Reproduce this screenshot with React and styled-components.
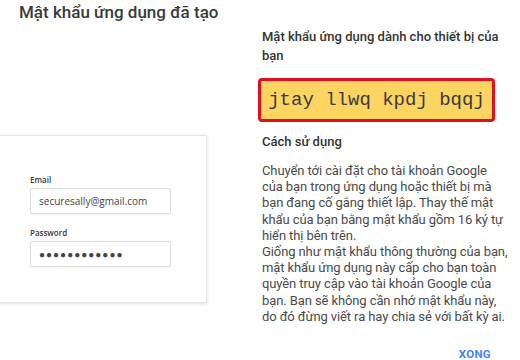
import React from "react";
import styled, { createGlobalStyle } from "styled-components";

const GlobalStyle = createGlobalStyle`
  html, body {
    margin: 0;
    padding: 0;
    background: #ffffff;
    font-family: Roboto, "Noto Sans", Arial, sans-serif;
    overflow: hidden;
  }
`;

const Page = styled.div`
  width: 520px;
  height: 360px;
  overflow: hidden;
`;

const Title = styled.h1`
  margin: 0;
  padding: 2px 0 0 19px;
  font-size: 17px;
  font-weight: 500;
  color: #3a3a3a;
  line-height: 20px;
`;

const Body = styled.div`
  display: grid;
  grid-template-columns: 258px 262px;
  margin-top: 5px;
`;

const LeftCol = styled.div`
  padding-top: 108px;
`;

const Card = styled.div`
  margin-left: -12px;
  width: 219px;
  height: 168px;
  border: 1px solid #e6e6e6;
  box-shadow: 0 1px 3px rgba(0, 0, 0, 0.12);
  background: #fff;
  box-sizing: border-box;
  padding: 39px 0 0 41px;
`;

const FieldLabel = styled.div`
  font-size: 8px;
  font-weight: 600;
  color: #3a3a3a;
  font-family: "Open Sans", Roboto, sans-serif;
  line-height: 10px;
  margin-bottom: 3px;
  margin-top: ${(p) => (p.$gap ? "14px" : "0")};
`;

const Input = styled.div`
  width: 141px;
  height: 26px;
  box-sizing: border-box;
  border: 1px solid #dcdcdc;
  border-radius: 2px;
  box-shadow: 0 1px 2px rgba(0, 0, 0, 0.06);
  display: flex;
  align-items: center;
  padding-left: 8px;
  font-size: 10px;
  color: #444;
  font-family: "Open Sans", Roboto, sans-serif;
  letter-spacing: ${(p) => (p.$dots ? "1px" : "0")};
`;

const RightCol = styled.div`
  padding-left: 4px;
  color: #3c3c3c;
`;

const SubHead = styled.div`
  font-size: 13px;
  font-weight: 500;
  line-height: 19px;
  color: #333;
  margin-top: ${(p) => p.$top || "0"};
`;

const Line = styled.span`
  display: block;
  white-space: nowrap;
`;

const CodeBox = styled.div`
  margin: 13px 0 0 -4px;
  width: 237px;
  height: 44px;
  box-sizing: border-box;
  border: 3px solid #e0101e;
  border-radius: 4px;
  background: #fcd462;
  display: flex;
  align-items: center;
  justify-content: center;
  font-family: "Liberation Mono", "Courier New", monospace;
  font-size: 19px;
  color: #3a3a3a;
`;

const Para = styled.p`
  margin: 12px 0 0;
  font-size: 13px;
  line-height: 16.2px;
  color: #4a4a4a;
  letter-spacing: -0.1px;
`;

const Footer = styled.div`
  display: flex;
  justify-content: flex-end;
  width: 229px;
  margin-top: 22px;
`;

const DoneButton = styled.button`
  border: none;
  background: none;
  padding: 0;
  font-family: Roboto, sans-serif;
  font-size: 11.5px;
  font-weight: 700;
  color: #4285f4;
  letter-spacing: 0.3px;
  line-height: 14px;
`;

const headLines = ["Mật khẩu ứng dụng dành cho thiết bị của", "bạn"];

const paraLines = [
  "Chuyển tới cài đặt cho tài khoản Google",
  "của bạn trong ứng dụng hoặc thiết bị mà",
  "bạn đang cố gắng thiết lập. Thay thế mật",
  "khẩu của bạn bằng mật khẩu gồm 16 ký tự",
  "hiển thị bên trên.",
  "Giống như mật khẩu thông thường của bạn,",
  "mật khẩu ứng dụng này cấp cho bạn toàn",
  "quyền truy cập vào tài khoản Google của",
  "bạn. Bạn sẽ không cần nhớ mật khẩu này,",
  "do đó đừng viết ra hay chia sẻ với bất kỳ ai.",
];

export default function App() {
  return (
    <Page>
      <GlobalStyle />
      <Title>Mật khẩu ứng dụng đã tạo</Title>
      <Body>
        <LeftCol>
          <Card>
            <FieldLabel>Email</FieldLabel>
            <Input>securesally@gmail.com</Input>
            <FieldLabel $gap>Password</FieldLabel>
            <Input $dots>●●●●●●●●●●●●</Input>
          </Card>
        </LeftCol>
        <RightCol>
          <SubHead>
            {headLines.map((l) => (
              <Line key={l}>{l}</Line>
            ))}
          </SubHead>
          <CodeBox>jtay llwq kpdj bqqj</CodeBox>
          <SubHead $top="10px">Cách sử dụng</SubHead>
          <Para>
            {paraLines.map((l) => (
              <Line key={l}>{l}</Line>
            ))}
          </Para>
          <Footer>
            <DoneButton>XONG</DoneButton>
          </Footer>
        </RightCol>
      </Body>
    </Page>
  );
}
